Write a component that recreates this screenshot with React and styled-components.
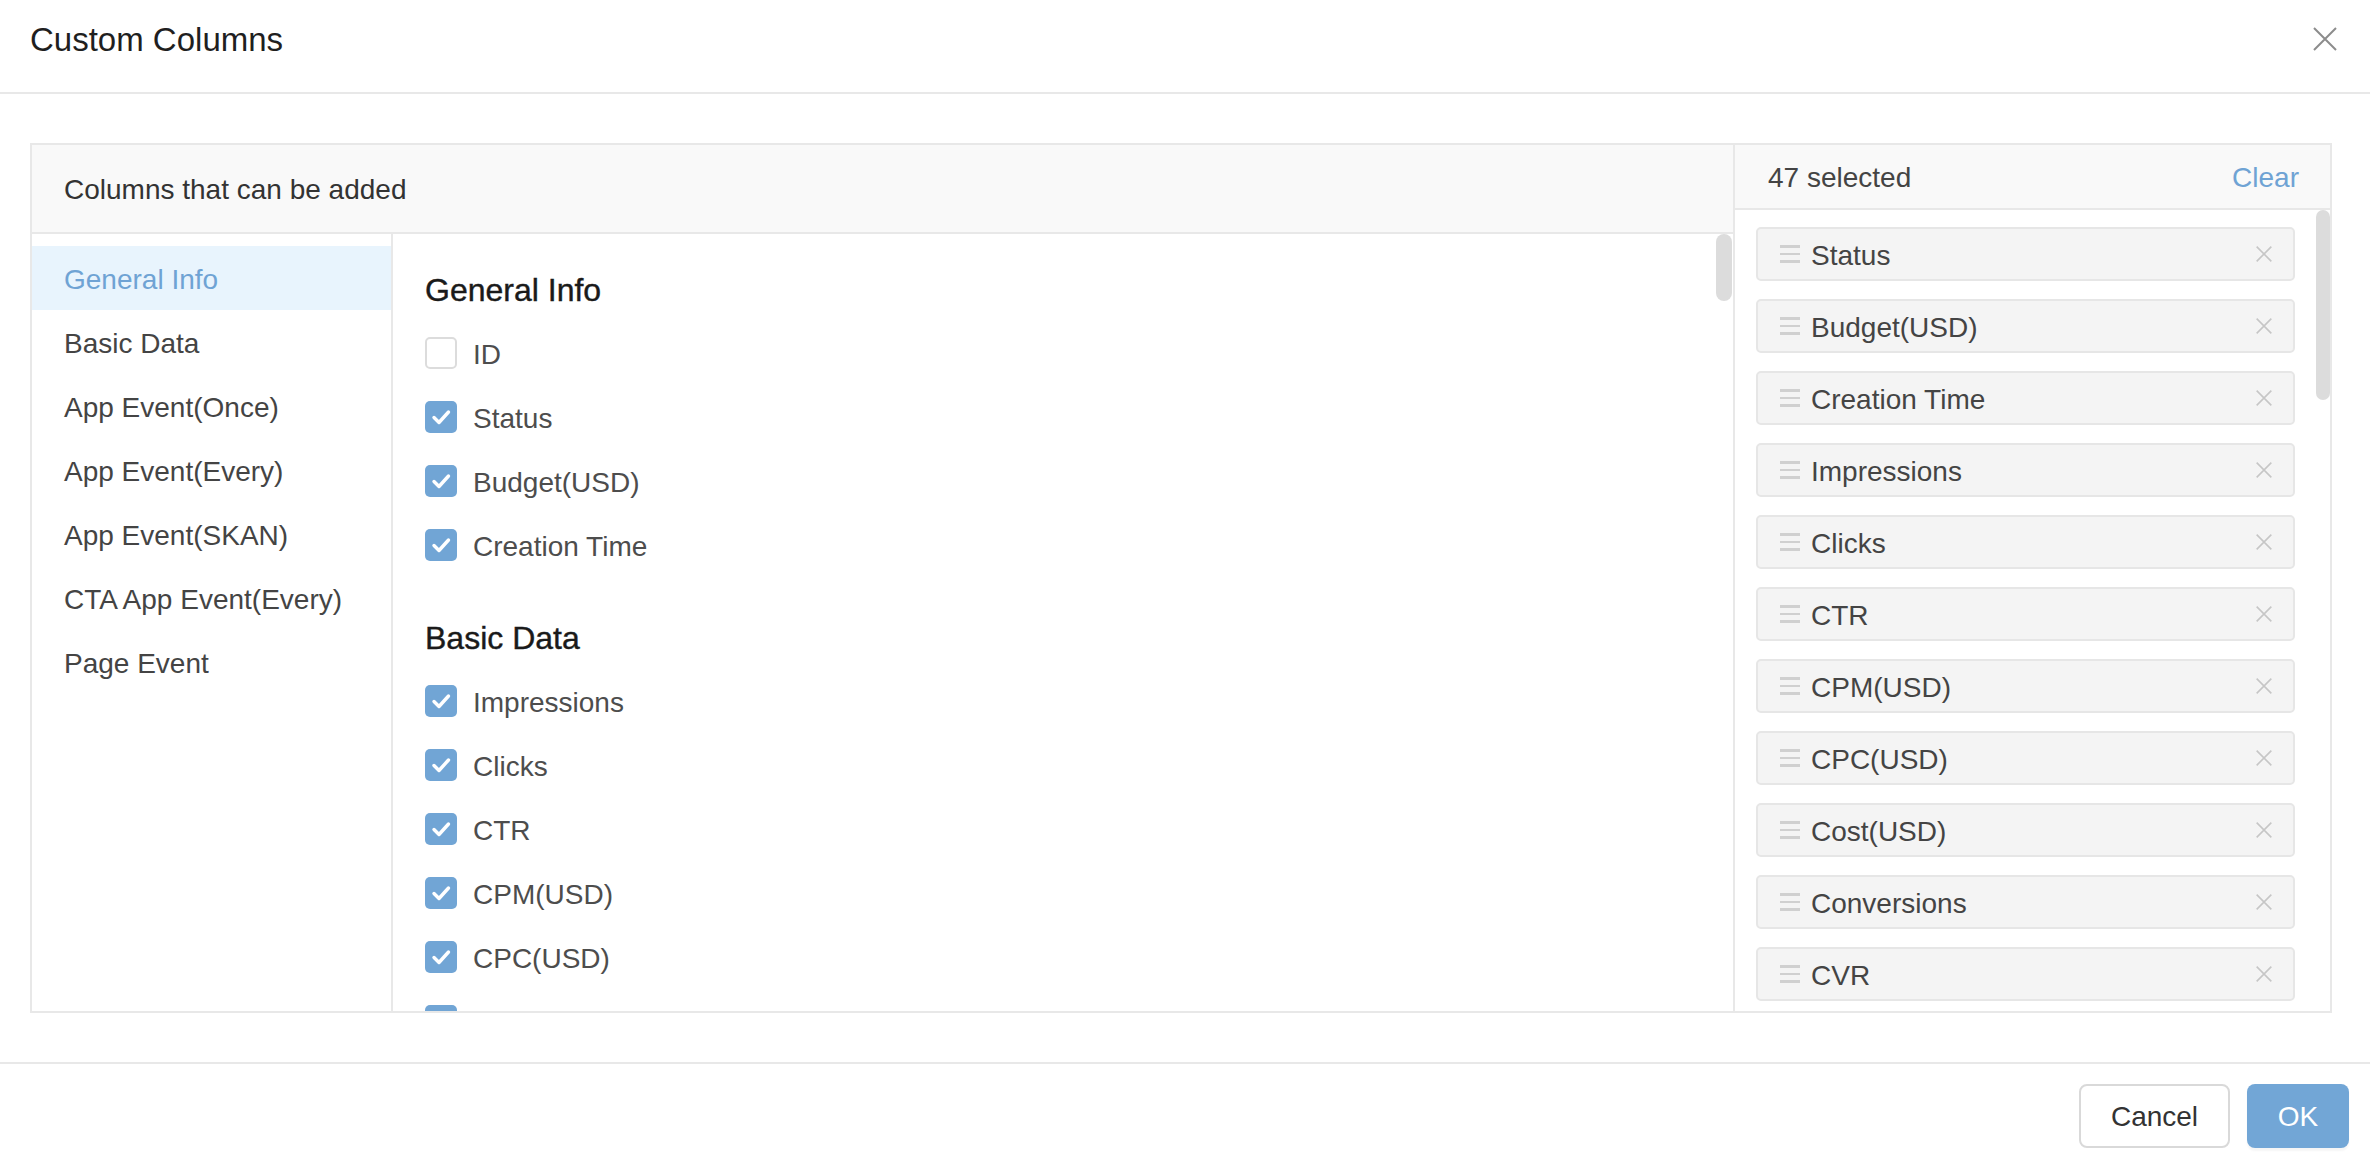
import React from 'react';
import styled, { createGlobalStyle } from 'styled-components';

const GlobalStyle = createGlobalStyle`
  html, body {
    margin: 0;
    padding: 0;
    background: #fff;
  }
  body {
    font-family: "Liberation Sans", Arial, sans-serif;
    color: #333;
  }
  * { box-sizing: border-box; }
`;

const nav = [
  'General Info',
  'Basic Data',
  'App Event(Once)',
  'App Event(Every)',
  'App Event(SKAN)',
  'CTA App Event(Every)',
  'Page Event',
];

const groups = [
  {
    title: 'General Info',
    items: [
      { label: 'ID', checked: false },
      { label: 'Status', checked: true },
      { label: 'Budget(USD)', checked: true },
      { label: 'Creation Time', checked: true },
    ],
  },
  {
    title: 'Basic Data',
    items: [
      { label: 'Impressions', checked: true },
      { label: 'Clicks', checked: true },
      { label: 'CTR', checked: true },
      { label: 'CPM(USD)', checked: true },
      { label: 'CPC(USD)', checked: true },
      { label: 'Cost(USD)', checked: true },
    ],
  },
];

const selected = [
  'Status',
  'Budget(USD)',
  'Creation Time',
  'Impressions',
  'Clicks',
  'CTR',
  'CPM(USD)',
  'CPC(USD)',
  'Cost(USD)',
  'Conversions',
  'CVR',
];

const CloseIcon = ({ size = 24, color = '#8c8c8c', stroke = 2 }) => (
  <svg width={size} height={size} viewBox="0 0 24 24" fill="none">
    <path d="M1 1 L23 23 M23 1 L1 23" stroke={color} strokeWidth={stroke} />
  </svg>
);

const CheckMark = () => (
  <svg width="32" height="32" viewBox="0 0 32 32" fill="none">
    <path
      d="M9 16.5 L14 21.5 L23.5 11"
      stroke="#fff"
      strokeWidth="3.4"
      strokeLinecap="round"
      strokeLinejoin="round"
    />
  </svg>
);

const App = () => {
  return (
    <>
      <GlobalStyle />
      <Modal>
        <Header>
          <Title>Custom Columns</Title>
          <CloseButton>
            <CloseIcon />
          </CloseButton>
        </Header>
        <Body>
          <Panel>
            <Available>
              <SectionHead>Columns that can be added</SectionHead>
              <AvailableInner>
                <Nav>
                  {nav.map((n, i) => (
                    <NavItem key={n} $active={i === 0}>
                      <span>{n}</span>
                    </NavItem>
                  ))}
                </Nav>
                <Content>
                  {groups.map((g) => (
                    <Group key={g.title}>
                      <GroupTitle>{g.title}</GroupTitle>
                      {g.items.map((it) => (
                        <CheckRow key={it.label}>
                          <Box $checked={it.checked}>{it.checked && <CheckMark />}</Box>
                          <CheckLabel>{it.label}</CheckLabel>
                        </CheckRow>
                      ))}
                    </Group>
                  ))}
                  <ScrollThumb $top={0} $height={67} $width={16} $right={1} />
                </Content>
              </AvailableInner>
            </Available>
            <Selected>
              <SelectedHead>
                <span>47 selected</span>
                <ClearLink>Clear</ClearLink>
              </SelectedHead>
              <SelectedList>
                {selected.map((s) => (
                  <Card key={s}>
                    <Handle>
                      <i />
                      <i />
                      <i />
                    </Handle>
                    <CardLabel>{s}</CardLabel>
                    <CardRemove>
                      <CloseIcon size={16} color="#c6c6c6" stroke={2.4} />
                    </CardRemove>
                  </Card>
                ))}
                <ScrollThumb $top={0} $height={190} $width={14} $right={0} />
              </SelectedList>
            </Selected>
          </Panel>
        </Body>
        <Footer>
          <CancelButton>Cancel</CancelButton>
          <OkButton>OK</OkButton>
        </Footer>
      </Modal>
    </>
  );
};

export default App;

const Modal = styled.div`
  width: 2370px;
  height: 1156px;
  background: #fff;
  display: flex;
  flex-direction: column;
  overflow: hidden;
`;

const Header = styled.div`
  height: 94px;
  flex-shrink: 0;
  display: flex;
  align-items: center;
  justify-content: space-between;
  padding: 0 33px 14px 30px;
  border-bottom: 2px solid #e8e8e8;
`;

const Title = styled.h2`
  margin: 0;
  font-size: 33px;
  font-weight: 400;
  color: #1f1f1f;
  line-height: 40px;
  padding-top: 2px;
`;

const CloseButton = styled.span`
  display: flex;
  width: 24px;
  height: 24px;
  cursor: pointer;
`;

const Body = styled.div`
  padding: 49px 38px 49px 30px;
  flex-shrink: 0;
`;

const Panel = styled.div`
  height: 870px;
  border: 2px solid #e8e8e8;
  display: flex;
`;

const Available = styled.div`
  flex: 1;
  display: flex;
  flex-direction: column;
  border-right: 2px solid #e8e8e8;
  min-width: 0;
`;

const SectionHead = styled.div`
  height: 89px;
  flex-shrink: 0;
  display: flex;
  align-items: center;
  padding: 3px 0 0 32px;
  background: #f9f9f9;
  border-bottom: 2px solid #e8e8e8;
  font-size: 28px;
  color: #333;
`;

const AvailableInner = styled.div`
  flex: 1;
  display: flex;
  min-height: 0;
`;

const Nav = styled.div`
  width: 361px;
  flex-shrink: 0;
  padding-top: 12px;
  border-right: 2px solid #e8e8e8;
`;

const NavItem = styled.div`
  height: 64px;
  display: flex;
  align-items: center;
  padding: 3px 0 0 32px;
  font-size: 28px;
  color: ${(p) => (p.$active ? '#6fa3d4' : '#444')};
  background: ${(p) => (p.$active ? '#e8f4fd' : 'transparent')};
`;

const Content = styled.div`
  flex: 1;
  position: relative;
  overflow: hidden;
  padding: 25px 0 0 32px;
`;

const Group = styled.div`
  & + & {
    margin-top: 30px;
  }
`;

const GroupTitle = styled.div`
  height: 62px;
  display: flex;
  align-items: center;
  font-size: 32px;
  font-weight: 400;
  color: #1a1a1a;
  -webkit-text-stroke: 0.4px #1a1a1a;
`;

const CheckRow = styled.label`
  height: 64px;
  display: flex;
  align-items: center;
  gap: 16px;
  cursor: pointer;
`;

const Box = styled.span`
  width: 32px;
  height: 32px;
  flex-shrink: 0;
  border-radius: 5px;
  display: flex;
  background: ${(p) => (p.$checked ? '#71a5d5' : '#fff')};
  border: ${(p) => (p.$checked ? 'none' : '2px solid #dcdcdc')};
`;

const CheckLabel = styled.span`
  font-size: 28px;
  color: #4d4d4d;
  padding-top: 3px;
`;

const ScrollThumb = styled.div`
  position: absolute;
  top: ${(p) => p.$top}px;
  right: ${(p) => p.$right}px;
  width: ${(p) => p.$width}px;
  height: ${(p) => p.$height}px;
  border-radius: ${(p) => p.$width / 2}px;
  background: #dcdcdc;
`;

const Selected = styled.div`
  width: 595px;
  flex-shrink: 0;
  display: flex;
  flex-direction: column;
`;

const SelectedHead = styled.div`
  height: 65px;
  flex-shrink: 0;
  display: flex;
  align-items: center;
  justify-content: space-between;
  padding: 3px 31px 0 33px;
  background: #f9f9f9;
  border-bottom: 2px solid #e8e8e8;
  font-size: 28px;
  color: #444;
`;

const ClearLink = styled.span`
  color: #6fa3d4;
  cursor: pointer;
`;

const SelectedList = styled.div`
  flex: 1;
  position: relative;
  overflow: hidden;
  padding: 17px 35px 0 21px;
  display: flex;
  flex-direction: column;
  gap: 18px;
`;

const Card = styled.div`
  height: 54px;
  flex-shrink: 0;
  display: flex;
  align-items: center;
  padding: 0 21px 0 22px;
  background: #f4f4f4;
  border: 2px solid #e6e6e6;
  border-radius: 5px;
`;

const Handle = styled.span`
  width: 20px;
  display: flex;
  flex-direction: column;
  gap: 5px;
  margin-right: 11px;

  i {
    display: block;
    height: 2.5px;
    background: #d0d0d0;
  }
`;

const CardLabel = styled.span`
  flex: 1;
  font-size: 28px;
  color: #444;
  padding-top: 3px;
`;

const CardRemove = styled.span`
  display: flex;
  cursor: pointer;
`;

const Footer = styled.div`
  flex: 1;
  display: flex;
  justify-content: flex-end;
  align-items: flex-start;
  gap: 17px;
  padding: 20px 21px 0 0;
  border-top: 2px solid #e8e8e8;
`;

const BaseButton = styled.button`
  height: 64px;
  border-radius: 8px;
  font-family: "Liberation Sans", Arial, sans-serif;
  font-size: 28px;
  padding-top: 3px;
  cursor: pointer;
`;

const CancelButton = styled(BaseButton)`
  width: 151px;
  background: #fff;
  border: 2px solid #d9d9d9;
  color: #333;
`;

const OkButton = styled(BaseButton)`
  width: 102px;
  background: #72a6d6;
  border: none;
  color: #fff;
  box-shadow: 0 3px 2px rgba(0, 0, 0, 0.04);
`;
